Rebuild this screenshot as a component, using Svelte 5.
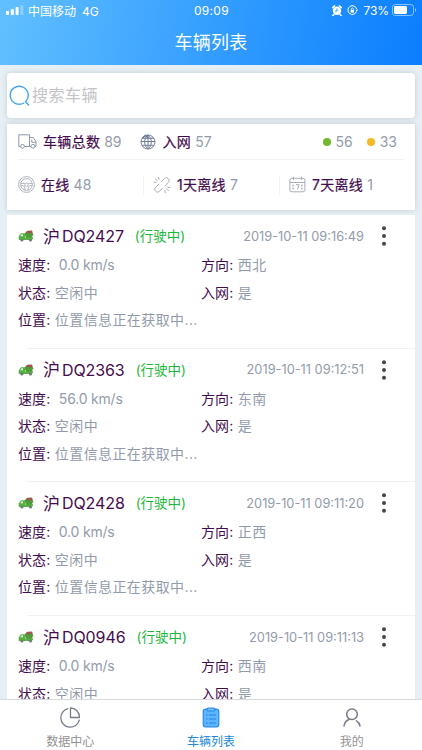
<script lang="ts">
  type Vehicle = {
    plate: string;
    time: string;
    speed: string;
    direction: string;
  };

  const vehicles: Vehicle[] = [
    { plate: 'DQ2427', time: '2019-10-11 09:16:49', speed: '0.0', direction: '西北' },
    { plate: 'DQ2363', time: '2019-10-11 09:12:51', speed: '56.0', direction: '东南' },
    { plate: 'DQ2428', time: '2019-10-11 09:11:20', speed: '0.0', direction: '正西' },
    { plate: 'DQ0946', time: '2019-10-11 09:11:13', speed: '0.0', direction: '西南' }
  ];
</script>

<div class="screen">
  <header>
    <div class="status-bar">
      <div class="carrier">
        <svg width="18" height="10" viewBox="0 0 18 10" fill="#fff">
          <rect x="0" y="6" width="3" height="4" rx="0.8" />
          <rect x="4.8" y="4" width="3" height="6" rx="0.8" />
          <rect x="9.6" y="2" width="3" height="8" rx="0.8" />
          <rect x="14.4" y="0" width="3" height="10" rx="0.8" opacity="0.3" />
        </svg>
        <span>中国移动<span class="network">4G</span></span>
      </div>
      <span class="clock">09:09</span>
      <div class="power">
        <svg class="alarm" width="10" height="11" viewBox="0 0 10 11">
          <circle cx="5" cy="5.8" r="4.2" fill="#fff" />
          <path d="M.7 2.6 2.6.8M9.3 2.6 7.4.8M2 9.2.9 10.4M8 9.2l1.1 1.2" stroke="#fff" stroke-width="1.5" stroke-linecap="round" />
          <path d="M5 3.4V6H3" stroke="#2b95fb" fill="none" />
        </svg>
        <svg class="lock" width="11" height="11" viewBox="0 0 11 11" fill="none" stroke="#fff">
          <path d="M9.5 6.5A4.4 4.4 0 1 1 9.6 4" />
          <path d="m8.3 5 1.7 1.6L11 4.5z" fill="#fff" stroke="none" />
          <rect x="3.6" y="5" width="3.4" height="2.6" fill="#fff" stroke="none" />
          <path d="M4.3 5V4a1 1 0 0 1 2 0v1" stroke-width=".8" />
        </svg>
        <span class="percent">73%</span>
        <svg width="25" height="12" viewBox="0 0 25 12">
          <rect x=".5" y=".5" width="21" height="11" rx="2.8" fill="none" stroke="#fff" stroke-opacity=".5" />
          <rect x="2" y="2" width="13" height="8" rx="1.4" fill="#fff" />
          <path d="M23 4v4c1.6-.7 1.6-3.3 0-4z" fill="#fff" opacity=".5" />
        </svg>
      </div>
    </div>
    <h1>车辆列表</h1>
  </header>

  <main>
    <div class="search card">
      <svg width="22" height="22" viewBox="0 0 22 22" fill="none" stroke="#45a4ee" stroke-width="1.4" stroke-linecap="round">
        <path d="M14.8 18A9 9 0 1 1 16.500 16.700L19.600 20" />
      </svg>
      <span>搜索车辆</span>
    </div>

    <section class="stats card">
      <div class="totals">
        <svg class="truck" width="19" height="15" viewBox="0 0 19 15" fill="none" stroke="#8e97a8">
          <path d="M2.5 12.5H.8V.8h10.700v11.700H6.500M11.500 3.500h3.700l2.800 4.300v4.700h-1.200M13 12.500h-1.500M13.800 5.500v2.800H18" />
          <circle cx="4.5" cy="12.3" r="1.9" /><circle cx="14.9" cy="12.3" r="1.9" />
        </svg>
        <span class="label">车辆总数</span><span class="num">89</span>
        <svg class="globe" width="16" height="16" viewBox="0 0 16 16" fill="none" stroke="#707e96">
          <circle cx="8" cy="8" r="7" />
          <path d="M1 7.5h14M2 4.3h12M2 11.3h12M8 1v14M8 1C3.5 4.5 3.5 11.5 8 15M8 1c4.5 3.500 4.500 10.500 0 14" />
          <path d="M.5 4.200 2 1.500" stroke="#fff" stroke-width="2" />
          <path d="m2 4.500 3.500-3 3 2.300" stroke-width="1.600" />
        </svg>
        <span class="label">入网</span><span class="num">57</span>
        <span class="lights">
          <i class="dot green"></i><span class="num">56</span>
          <i class="dot amber"></i><span class="num">33</span>
        </span>
      </div>
      <div class="offline">
        <div class="cell">
          <svg width="17" height="17" viewBox="0 0 17 17" fill="none" stroke="#a4acb8" stroke-width=".9">
            <circle cx="8.5" cy="8.5" r="7.9" />
            <circle cx="8.5" cy="8.5" r="5.9" />
            <circle cx="8.5" cy="8.8" r="1.7" />
            <path d="M2.9 7.4H6.800M10.200 7.400h3.900M2.900 9.600h1.700c1.600 0 2.400 1.500 2.400 4.500M14.100 9.600h-1.700c-1.600 0-2.400 1.500-2.400 4.500" />
          </svg>
          <span class="label">在线</span><span class="num">48</span>
        </div>
        <div class="cell">
          <svg width="18" height="18" viewBox="0 0 18 18" fill="none" stroke="#a4acb8" stroke-linecap="round">
            <path d="m8.500 5.500 3-3c2.500-2.300 6 1 4 3.800l-3.500 3.500M6 8 2.500 11.500c-2.300 2.500 1 6 3.800 4L9.500 12.300" />
            <path d="M5.500 1.300 6 3.500M2.500 3.200l1.700 1.500M1 6.200l2.200.4M11.800 14.500l.5 2.200M13.800 13l1.700 1.700M14.800 11.200l2.200.4" />
          </svg>
          <span class="label">1天离线</span><span class="num">7</span>
        </div>
        <div class="cell">
          <svg width="17" height="17" viewBox="0 0 17 17" fill="none" stroke="#a4acb8">
            <rect x=".9" y="2.3" width="15" height="13.5" rx="2" />
            <path d="M1 6.5h15M4.500.8v3.400M12.500.8v3.400M7 8.700h3L8.500 13.200" />
            <path d="M3.300 9.500h1.500M3.300 12.500h1.500M12 9.500h1.500M12 12.500h1.500" stroke-width="1.300" />
          </svg>
          <span class="label">7天离线</span><span class="num">1</span>
        </div>
      </div>
    </section>

    <section class="list">
      {#each vehicles as vehicle (vehicle.plate)}
        <article>
          <div class="title">
            <svg width="16" height="14" viewBox="0 0 16 14">
              <path d="M6.500 4.500 8.500 2.700l5.500-.2 1.300 3L13.500 9H8z" fill="#4f9a3a" />
              <path d="M7.500 3.200 9.500 1.700l4.300-.1 1 2-4 .8z" fill="#a0584e" />
              <path d="M.7 10.500V7.300L3 4.300h3.800l.5 4.400 7.700-.5v1.500l-1.500 1.300H1z" fill="#55b23e" />
              <path d="m2.200 7.200 1.300-1.900H5v1.900z" fill="#e4f3df" />
              <circle cx="3.9" cy="11" r="1.6" fill="#737b78" />
              <circle cx="12.500" cy="11" r="1.6" fill="#737b78" />
            </svg>
            <span class="region">沪</span>
            <span class="plate">{vehicle.plate}</span>
            <span class="state">(行驶中)</span>
            <time>{vehicle.time}</time>
            <svg class="more" width="4" height="20" viewBox="0 0 4 20" fill="#41464e">
              <circle cx="2" cy="2.3" r="2" /><circle cx="2" cy="10" r="2" /><circle cx="2" cy="17.7" r="2" />
            </svg>
          </div>
          <div class="row">
            <p><b>速度:</b><span class="speed">{vehicle.speed} km/s</span></p>
            <p><b>方向:</b><span>{vehicle.direction}</span></p>
          </div>
          <div class="row">
            <p><b>状态:</b><span>空闲中</span></p>
            <p><b>入网:</b><span>是</span></p>
          </div>
          <div class="row">
            <p><b>位置:</b><span>位置信息正在获取中...</span></p>
          </div>
        </article>
      {/each}
    </section>
  </main>

  <nav>
    <div class="tab">
      <svg width="22" height="22" viewBox="0 0 22 22" fill="none" stroke="#777b8a" stroke-width="1.3">
        <path d="M8.8 1.7a9.400 9.400 0 1 0 11.500 11.500" stroke-linecap="round" />
        <path d="M11.5 1v9.500H20.500C20.500 5 16.500 1 11.500 1z" stroke-linejoin="round" />
      </svg>
      <span>数据中心</span>
    </div>
    <div class="tab active">
      <svg width="22" height="22" viewBox="0 0 22 22" fill="none" stroke="#2184ea" stroke-width="1.1">
        <rect x="3.2" y="2" width="15.6" height="18" rx="2.5" fill="#5db6ff" />
        <rect x="7" y="1" width="8" height="3" rx="1.5" fill="#75c4ff" />
        <path d="M9 8h7M9 12h7M9 16h7M6 8h1.500M6 12h1.500M6 16h1.500" />
      </svg>
      <span>车辆列表</span>
    </div>
    <div class="tab">
      <svg width="22" height="22" viewBox="0 0 22 22" fill="none" stroke="#777b8a" stroke-width="1.5" stroke-linecap="round">
        <circle cx="11" cy="7.2" r="5.3" />
        <path d="M8 12.500c-2.800 1-4.500 3.300-5 6.500M15.500 13.800c2 1.200 3.100 2.900 3.500 5.200" />
      </svg>
      <span>我的</span>
    </div>
  </nav>
</div>

<style>
  :global(body) {
    margin: 0;
  }
  .screen {
    display: flex;
    flex-direction: column;
    width: 422px;
    height: 750px;
    overflow: hidden;
    background: #e6eff3;
    color: #430c4e;
    font-family: Inter, 'Noto Sans CJK SC', sans-serif;
    font-size: 14px;
  }
  svg {
    display: block;
    flex: none;
  }
  header {
    flex: none;
    height: 65px;
    background: linear-gradient(100deg, #62c0ff, #349eff 50%, #0a7eff);
    color: #fff;
  }
  .status-bar {
    display: grid;
    grid-template-columns: 1fr auto 1fr;
    align-items: center;
    height: 20px;
    padding: 0 5px 0 6px;
    font-size: 12px;
  }
  .carrier,
  .power {
    display: flex;
    align-items: center;
  }
  .carrier {
    gap: 4px;
  }
  .network {
    margin-left: 6px;
  }
  .clock {
    letter-spacing: 0.3px;
  }
  .power {
    justify-content: flex-end;
  }
  .lock {
    margin: 0 6px 0 5px;
  }
  .percent {
    margin-right: 3px;
    letter-spacing: -0.1px;
  }
  h1 {
    margin: 0;
    font-size: 18px;
    font-weight: 400;
    line-height: 45px;
    text-align: center;
    letter-spacing: 0.3px;
  }
  main {
    flex: 1;
    min-height: 0;
    overflow: hidden;
    padding: 8px 7px 0;
  }
  .card {
    background: #fff;
    box-shadow: 0 0 5px rgba(90, 110, 120, 0.25);
  }
  .search {
    display: flex;
    align-items: center;
    gap: 1px;
    height: 45px;
    padding-left: 2px;
    border-radius: 4px;
    color: #c3c3c8;
    font-size: 16px;
    letter-spacing: 0.5px;
  }
  .search span {
    margin-top: -4px;
  }
  .stats {
    height: 86px;
    margin-top: 6px;
    border-radius: 1px;
  }
  .totals {
    display: flex;
    align-items: center;
    height: 35px;
    margin: 0 11px;
    border-bottom: 1px solid #f2f2f5;
  }
  .label {
    margin-top: -2px;
    letter-spacing: 0.3px;
    white-space: nowrap;
    -webkit-text-stroke: 0.2px currentColor;
  }
  .num {
    margin-left: 4px;
    color: #929bab;
  }
  .truck {
    margin-right: 6px;
  }
  .globe {
    margin: 0 7px 0 18px;
  }
  .lights {
    display: flex;
    align-items: center;
    margin-left: auto;
    padding-right: 7px;
  }
  .lights .num {
    margin-left: 5px;
  }
  .dot {
    width: 8px;
    height: 8px;
    border-radius: 50%;
  }
  .dot.green {
    background: #73b72b;
  }
  .dot.amber {
    margin-left: 14px;
    background: #f3b922;
  }
  .offline {
    display: grid;
    grid-template-columns: 125px 136px 1fr;
    align-items: center;
    height: 49px;
    margin: 0 11px;
  }
  .cell {
    display: flex;
    align-items: center;
    height: 20px;
  }
  .cell .label {
    margin-left: 6px;
  }
  .cell + .cell {
    padding-left: 9px;
    border-left: 1px solid #f0f0f4;
  }
  .list {
    margin-top: 5px;
    background: #fff;
  }
  article {
    height: 133.7px;
    box-sizing: border-box;
    padding: 7px 11px 0;
    background: linear-gradient(#f0f1f4, #f0f1f4) 20px 100% / 388px 1px no-repeat;
  }
  .title {
    display: flex;
    align-items: center;
    height: 28px;
    font-size: 16px;
  }
  .region {
    margin: -2px 2px 0 9px;
    font-size: 17px;
  }
  .plate {
    letter-spacing: -0.1px;
  }
  .state {
    margin: -2px 0 0 11px;
    color: #1db73b;
    font-size: 13.5px;
  }
  time {
    margin-left: auto;
    color: #929bab;
    font-size: 12.8px;
  }
  .more {
    margin: 0 18px;
  }
  .row {
    display: grid;
    grid-template-columns: 183px 1fr;
    height: 27.5px;
    line-height: 30px;
    white-space: nowrap;
  }
  p {
    margin: 0;
    color: #929bab;
    letter-spacing: 0.4px;
  }
  b {
    margin-right: 4.5px;
    color: #430c4e;
    font-weight: 400;
    letter-spacing: 0.1px;
  }
  .speed {
    margin-left: 4px;
    letter-spacing: -0.2px;
  }
  nav {
    display: grid;
    grid-template-columns: repeat(3, 1fr);
    flex: none;
    height: 50px;
    border-top: 1px solid #d4dadd;
    background: #fff;
  }
  .tab {
    display: flex;
    flex-direction: column;
    align-items: center;
    gap: 4px;
    padding-top: 7px;
    color: #929292;
    font-size: 12px;
    line-height: 18px;
  }
  .tab.active {
    color: #2087d9;
  }
</style>
